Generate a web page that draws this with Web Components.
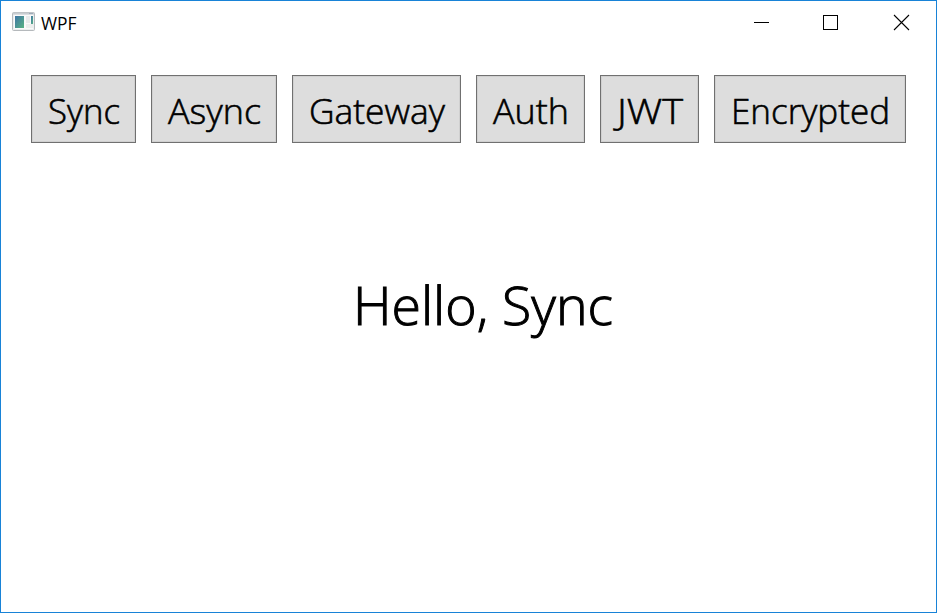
<!DOCTYPE html>
<html lang="en">
<head>
<meta charset="utf-8">
<title>WPF</title>
<style>
html, body { margin: 0; height: 100%; background: #fff; }
body { font-family: "Open Sans", "Noto Sans", sans-serif; color: #000; overflow: hidden; }
</style>
</head>
<body>
<app-window>
  <title-bar slot="title"><fit-text width="35.5">WPF</fit-text></title-bar>
  <tool-row>
    <push-button><fit-text width="72">Sync</fit-text></push-button>
    <push-button><fit-text width="93">Async</fit-text></push-button>
    <push-button><fit-text width="136">Gateway</fit-text></push-button>
    <push-button><fit-text width="76">Auth</fit-text></push-button>
    <push-button><fit-text width="66">JWT</fit-text></push-button>
    <push-button><fit-text width="159">Encrypted</fit-text></push-button>
  </tool-row>
  <result-text><fit-text width="260">Hello, Sync</fit-text></result-text>
</app-window>
<script>
function define(name, html, Base = HTMLElement) {
  customElements.define(name, class extends Base {
    constructor() {
      super();
      this.attachShadow({ mode: 'open' }).innerHTML = html;
    }
  });
}

/* A single line of text, condensed horizontally to a given width. */
class FitBase extends HTMLElement {
  connectedCallback() {
    const width = Number(this.getAttribute('width'));
    this.style.width = width + 'px';
    const line = this.shadowRoot.querySelector('span');
    line.style.transform = `scaleX(${width / line.getBoundingClientRect().width})`;
  }
}

define('app-window', `<style>
  :host { display: flex; flex-direction: column; box-sizing: border-box; width: 937px; height: 613px; border: 1px solid #1883d7; background: #fff; }
  main { flex: 1; display: flex; flex-direction: column; padding: 29px 30px 0; }
</style><slot name="title"></slot><main><slot></slot></main>`);

define('title-bar', `<style>
  :host { display: flex; align-items: center; height: 45px; padding-left: 11px; font-size: 17.5px; line-height: 24px; }
  .icon { width: 24px; height: 20px; margin: -3px 5px 0 0; }
  .caption { flex: 1; display: flex; margin-top: -2px; }
  .controls { display: flex; margin-top: -1px; }
  .controls svg { display: block; width: 70px; height: 44px; }
</style>
<svg class="icon" viewBox="0 0 24 20">
  <defs><linearGradient id="g" x1="0" y1="0" x2="1" y2="1"><stop offset="0" stop-color="#3f75a5"/><stop offset="1" stop-color="#58b383"/></linearGradient></defs>
  <rect x=".5" y=".5" width="22" height="18" rx="1" fill="#eceeef" stroke="#b5b9bc"/>
  <path d="M1 1.5h21" stroke="#c9cdd1" stroke-width="2"/><path d="M17 1.5h4" stroke="#9eabb9"/>
  <rect x="2" y="3" width="19" height="14" fill="#fafafa"/>
  <rect x="3" y="4" width="9" height="12" fill="url(#g)"/>
  <rect x="14" y="4" width="4" height="7" fill="#e8eaeb"/><rect x="14" y="12" width="7" height="4" fill="#eceeed"/>
  <rect x="19" y="4" width="2" height="8" fill="url(#g)"/>
</svg>
<div class="caption"><slot></slot></div>
<div class="controls">
  <svg viewBox="0 0 70 44"><path d="M28 21.5h15" stroke="#000" shape-rendering="crispEdges"/></svg>
  <svg viewBox="0 0 70 44"><rect x="27.5" y="14.5" width="14" height="14" fill="none" stroke="#000" shape-rendering="crispEdges"/></svg>
  <svg viewBox="0 0 70 44"><path d="M28 14l15 15M43 14L28 29" stroke="#000" stroke-width="1.1"/></svg>
</div>`);

define('tool-row', `<style>
  :host { display: flex; gap: 15px; height: 68px; }
</style><slot></slot>`);

define('push-button', `<style>
  :host { display: block; }
  button { display: block; box-sizing: border-box; height: 68px; margin: 0; padding: 3px 15.5px 0; border: 1px solid #707070; border-radius: 0; background: #ddd; box-shadow: inset 0 0 0 1px #d0d0d0; color: #000; font: inherit; font-size: 35.5px; font-weight: 300; -webkit-text-stroke: 0.6px #000; line-height: 49px; text-align: left; }
</style><button type="button"><slot></slot></button>`);

define('result-text', `<style>
  :host { display: flex; justify-content: center; margin-top: 125px; padding-left: 29px; font-size: 53px; font-weight: 300; -webkit-text-stroke: 1px #000; line-height: 74px; }
</style><slot></slot>`);

define('fit-text', `<style>
  :host { display: block; white-space: nowrap; }
  span { display: inline-block; transform-origin: 0 50%; }
</style><span><slot></slot></span>`, FitBase);
</script>
</body>
</html>
